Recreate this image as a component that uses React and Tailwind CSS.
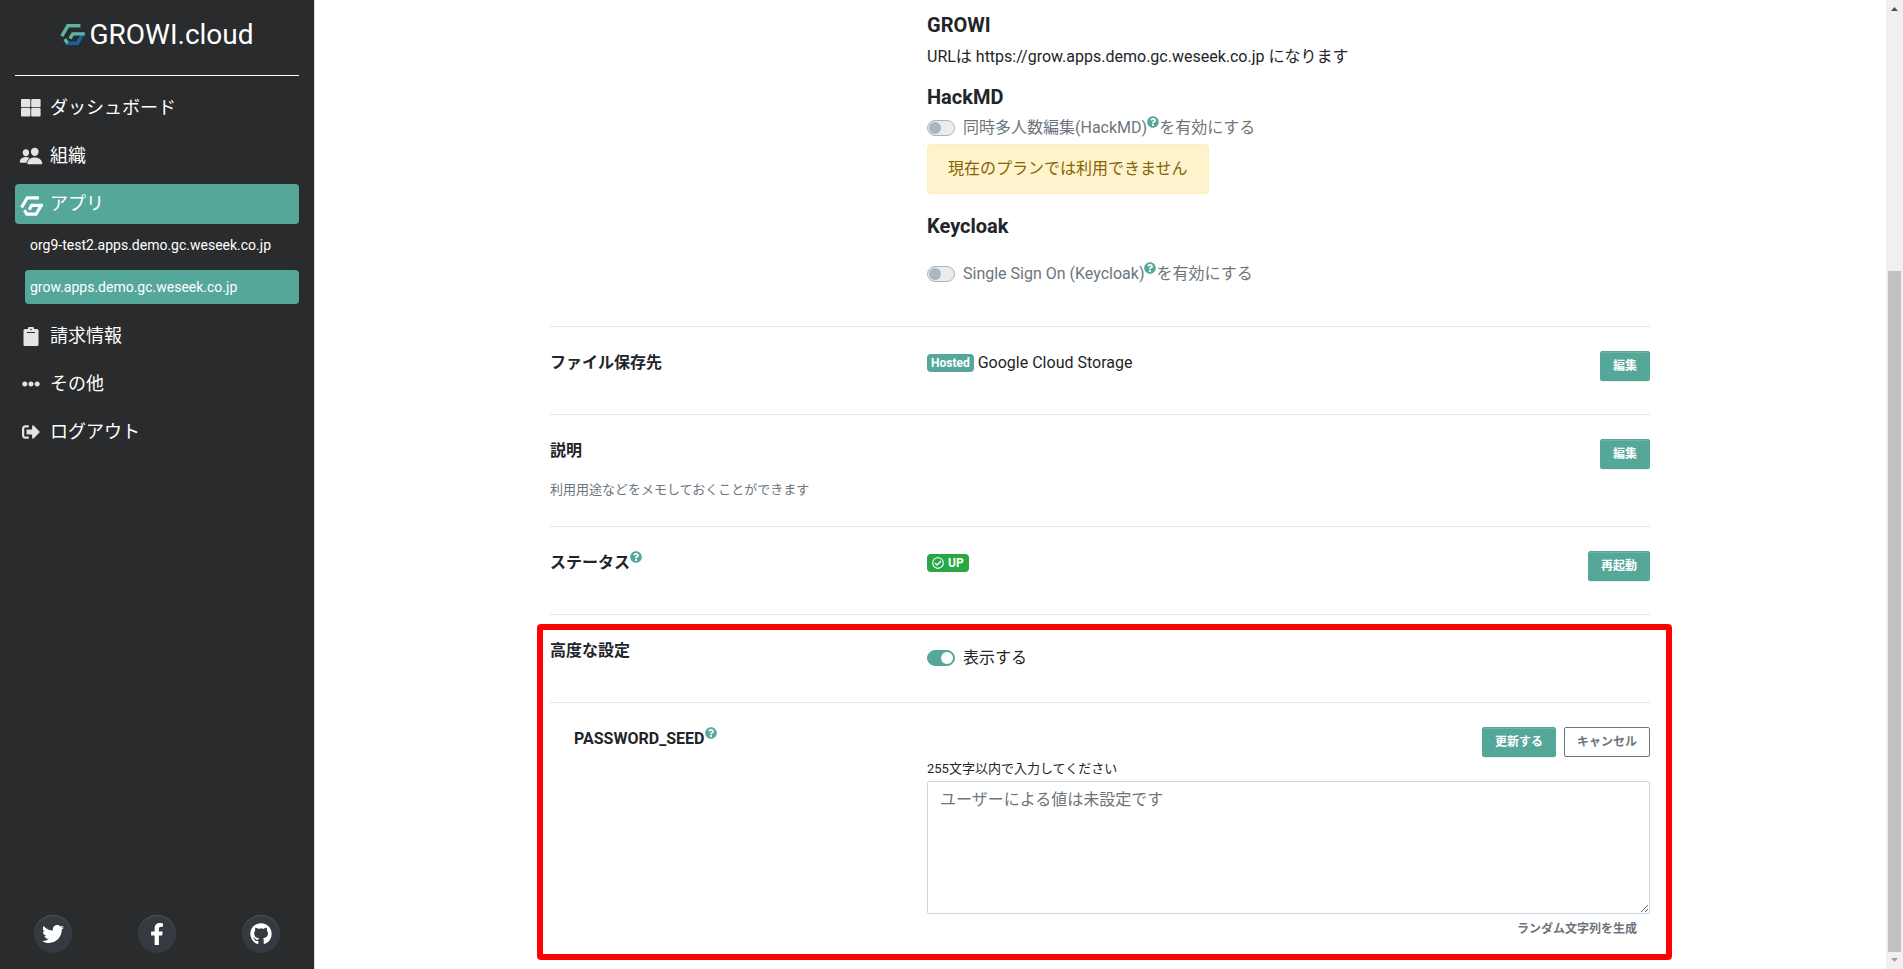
import { useState } from "react";
import { FaTwitter, FaFacebookF, FaGithub, FaQuestionCircle, FaSignOutAlt, FaRegCheckCircle, FaEllipsisH } from "react-icons/fa";
import { IoPeople } from "react-icons/io5";

function GrowiMark({ className, top = "currentColor", bottom = "currentColor" }) {
  return (
    <svg viewBox="0 0 73 62" className={className} fill="none" strokeWidth="10" aria-hidden="true">
      <path stroke={bottom} d="M18 57H51L65 33" />
      <path stroke={top} d="M60 5H23L5 36" />
      <path stroke={top} d="M73 29H37L29 43" />
      <path fill={top} d="M17 41l8 11-6 9-9-13z" />
    </svg>
  );
}

function GridIcon() {
  return (
    <svg viewBox="0 0 20 18" className="h-[18px] w-5" fill="currentColor" aria-hidden="true">
      <rect x="0" y="0" width="9.4" height="8.3" rx="1" />
      <rect x="10.2" y="0" width="9.4" height="8.3" rx="1" />
      <rect x="0" y="9.1" width="9.4" height="8.3" rx="1" />
      <rect x="10.2" y="9.1" width="9.4" height="8.3" rx="1" />
    </svg>
  );
}

function ClipboardIcon() {
  return (
    <svg viewBox="0 0 16 19" className="h-[19px] w-4" aria-hidden="true">
      <path fill="currentColor" d="M2 2h3a3 3 0 0 1 6 0h3a1.500 1.500 0 0 1 1.500 1.500v14A1.500 1.500 0 0 1 14 19H2a1.500 1.500 0 0 1-1.500-1.500v-14A1.500 1.500 0 0 1 2 2z" />
      <path stroke="#2a2b2d" strokeWidth="1" d="M4 5.500h8" />
      <circle cx="8" cy="2.500" r="0.800" fill="#2a2b2d" />
    </svg>
  );
}

function Help() {
  return (
    <a href="#help" aria-label="ヘルプ" className="inline-block align-[5px] text-[#55a79a]">
      <FaQuestionCircle className="size-3" />
    </a>
  );
}

function NavItem({ icon, label, active }) {
  return (
    <a
      href="#nav"
      className={
        active
          ? "flex h-10 items-center gap-[7px] rounded bg-[#55a79a] pl-1 text-lg text-white"
          : "flex h-10 items-center gap-[7px] rounded pl-1 text-lg text-white"
      }
    >
      <span className={active ? "flex w-6 justify-center pt-1 text-white" : "flex w-6 justify-center text-[#e4e4e4]"}>{icon}</span>
      {label}
    </a>
  );
}

function Switch({ id, checked, disabled, onChange, children }) {
  return (
    <div className="flex h-6 items-center">
      <input
        id={id}
        type="checkbox"
        role="switch"
        checked={checked}
        disabled={disabled}
        onChange={onChange}
        className="h-4 w-7 shrink-0 appearance-none rounded-full border border-[#adb5bd] bg-[#e9ecef] before:m-px before:block before:size-3 before:rounded-full before:bg-[#adb5bd] checked:border-[#55a79a] checked:bg-[#55a79a] checked:before:ml-[13px] checked:before:bg-white"
      />
      <label htmlFor={id} className={disabled ? "pl-2 leading-6 text-[#6c757d]" : "pl-2 leading-6 text-[#212529]"}>
        {children}
      </label>
    </div>
  );
}

function PrimaryButton({ children }) {
  return (
    <button
      type="button"
      className="h-[30px] rounded-xs border border-[#55a79a] bg-[#55a79a] px-3 text-xs font-bold text-white shadow-[inset_0_1px_0_rgba(255,255,255,0.15),0_1px_1px_rgba(0,0,0,0.075)]"
    >
      {children}
    </button>
  );
}

function Row({ title, children, action }) {
  return (
    <section className="grid min-h-[88px] grid-cols-[377px_1fr_auto] items-start border-t border-[#e5e5e5] pt-6 pb-[26px]">
      <div>{title}</div>
      <div>{children}</div>
      <div>{action}</div>
    </section>
  );
}

function Badge({ className, children }) {
  return (
    <span className={`inline-flex h-[18px] items-center gap-1 rounded text-xs font-bold text-white ${className}`}>
      {children}
    </span>
  );
}

function Social({ label, children }) {
  return (
    <a
      href="#social"
      aria-label={label}
      className="flex size-[38px] items-center justify-center rounded-full bg-[#343a40] text-[22px] text-white shadow-[inset_0_1px_0_rgba(255,255,255,0.15)]"
    >
      {children}
    </a>
  );
}

function Sidebar() {
  return (
    <aside className="flex w-[314px] shrink-0 flex-col bg-[#2a2b2d] px-[15px] shadow-[1px_0_0_#dcdcdc]">
      <a href="#home" className="flex h-[76px] items-center justify-center gap-1 border-b border-white pb-1.5 text-[28px] text-white">
        <GrowiMark className="h-[21px] w-[25px]" top="#5bb5a5" bottom="#1b60a8" />
        GROWI.cloud
      </a>
      <nav className="flex flex-col gap-2 pt-3">
        <NavItem icon={<GridIcon />} label="ダッシュボード" />
        <NavItem icon={<IoPeople className="size-6" />} label="組織" />
        <NavItem icon={<GrowiMark className="h-[20px] w-[23px]" />} label="アプリ" active />
        <div className="-mt-1 flex flex-col gap-2 pb-1 pl-[10px] text-sm text-white">
          <a href="#org9" className="flex h-[34px] items-center rounded px-[5px]">org9-test2.apps.demo.gc.weseek.co.jp</a>
          <a href="#grow" className="flex h-[34px] items-center rounded bg-[#55a79a] px-[5px]">grow.apps.demo.gc.weseek.co.jp</a>
        </div>
        <NavItem icon={<ClipboardIcon />} label="請求情報" />
        <NavItem icon={<FaEllipsisH className="size-[18px]" />} label="その他" />
        <NavItem icon={<FaSignOutAlt className="size-[18px]" />} label="ログアウト" />
      </nav>
      <div className="mt-auto flex justify-between px-[19px] pb-4">
        <Social label="Twitter"><FaTwitter /></Social>
        <Social label="Facebook"><FaFacebookF /></Social>
        <Social label="GitHub"><FaGithub /></Social>
      </div>
    </aside>
  );
}

function ScrollBar() {
  return (
    <div className="flex w-[17px] shrink-0 flex-col items-center bg-[#f0f0f0]" aria-hidden="true">
      <svg viewBox="0 0 17 17" className="size-[17px]"><path fill="#505050" d="M5 11l3.500-4L12 11z" /></svg>
      <div className="flex w-[13px] flex-1 flex-col">
        <div className="grow-[254]" />
        <div className="grow-[681] bg-[#c1c1c1]" />
      </div>
      <svg viewBox="0 0 17 17" className="size-[17px]"><path fill="#a3a3a3" d="M5 6l3.500 4L12 6z" /></svg>
    </div>
  );
}

export default function App() {
  const [advanced, setAdvanced] = useState(true);
  return (
    <div className="flex min-h-screen bg-white font-[Roboto,'Noto_Sans_CJK_JP',sans-serif] text-base text-[#212529]">
      <Sidebar />
      <main className="flex-1">
        <div className="mx-auto w-full max-w-[1100px]">
          <div className="grid grid-cols-[377px_1fr] pt-[13px] pb-10">
            <div className="col-start-2">
              <h3 className="text-xl leading-6 font-bold">GROWI</h3>
              <p className="mt-2 leading-6">URLは https://grow.apps.demo.gc.weseek.co.jp になります</p>
              <h3 className="mt-4 mb-[7px] text-xl leading-6 font-bold">HackMD</h3>
              <Switch id="hackmd" checked={false} disabled>
                同時多人数編集(HackMD)<Help />を有効にする
              </Switch>
              <p className="mt-1 h-[50px] w-fit rounded border border-[#ffeeba] bg-[#fff3cd] px-5 pt-3 leading-6 text-[#856404]">
                現在のプランでは利用できません
              </p>
              <h3 className="mt-5 mb-6 text-xl leading-6 font-bold">Keycloak</h3>
              <Switch id="keycloak" checked={false} disabled>
                Single Sign On (Keycloak)<Help />を有効にする
              </Switch>
            </div>
          </div>

          <Row title={<h4 className="leading-6 font-bold">ファイル保存先</h4>} action={<PrimaryButton>編集</PrimaryButton>}>
            <div className="flex h-6 items-center gap-1">
              <Badge className="bg-[#55a79a] px-1">Hosted</Badge>
              Google Cloud Storage
            </div>
          </Row>

          <Row
            title={
              <>
                <h4 className="leading-6 font-bold">説明</h4>
                <p className="mt-4 text-[13px] leading-[21px] text-[#6c757d]">利用用途などをメモしておくことができます</p>
              </>
            }
            action={<PrimaryButton>編集</PrimaryButton>}
          />

          <Row
            title={<h4 className="h-6 leading-6 font-bold">ステータス<Help /></h4>}
            action={<PrimaryButton>再起動</PrimaryButton>}
          >
            <div className="flex h-6 items-center">
              <Badge className="bg-[#28a745] px-[5px]"><FaRegCheckCircle className="size-3" />UP</Badge>
            </div>
          </Row>

          <div className="relative">
            <Row title={<h4 className="leading-6 font-bold">高度な設定</h4>}>
              <div className="pt-[7px]">
                <Switch id="advanced" checked={advanced} onChange={(e) => setAdvanced(e.target.checked)}>
                  表示する
                </Switch>
              </div>
            </Row>
            <section className="grid grid-cols-[377px_1fr] items-start border-t border-[#e5e5e5] pt-6 pb-6">
              <h4 className="h-6 pl-6 leading-6 font-bold">PASSWORD_SEED<Help /></h4>
              <div className="flex flex-col">
                <div className="flex justify-end gap-2">
                  <PrimaryButton>更新する</PrimaryButton>
                  <button type="button" className="h-[30px] rounded-xs border border-[#6c757d] px-3 text-xs font-bold text-[#6c757d]">
                    キャンセル
                  </button>
                </div>
                <label htmlFor="seed" className="my-0.5 text-[13px] leading-5">255文字以内で入力してください</label>
                <textarea
                  id="seed"
                  placeholder="ユーザーによる値は未設定です"
                  className="h-[133px] w-full rounded-xs border border-[#ced4da] px-3 py-1.5 leading-6 placeholder:text-[#6c757d]"
                />
                <button type="button" className="h-[30px] self-end px-[13px] text-xs font-bold text-[#6c757d]">
                  ランダム文字列を生成
                </button>
              </div>
            </section>
            <div className="pointer-events-none absolute top-[10px] -right-[22px] bottom-2 -left-[13px] rounded border-6 border-[#ff0000]" />
          </div>
        </div>
      </main>
      <ScrollBar />
    </div>
  );
}
